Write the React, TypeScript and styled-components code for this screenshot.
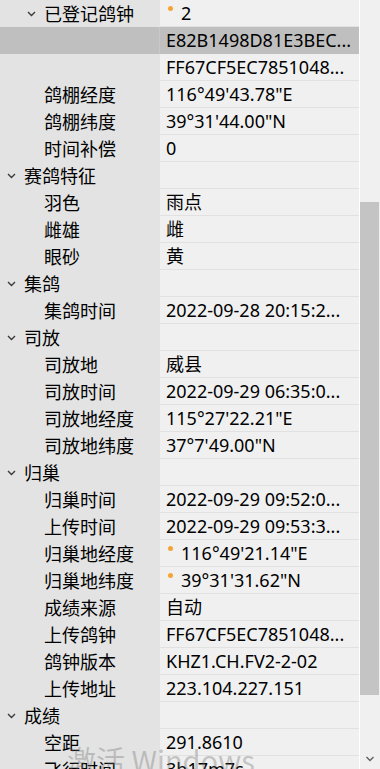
import React from "react";
import styled, { createGlobalStyle } from "styled-components";

const GlobalStyle = createGlobalStyle`
  html, body {
    margin: 0;
    padding: 0;
    height: 769px;
    overflow: hidden;
    background: #f0f0f0;
  }
  body {
    font-family: "Noto Sans", "Noto Sans CJK SC", sans-serif;
    font-size: 18px;
    color: #000;
  }
`;

const Frame = styled.div`
  position: relative;
  display: flex;
  width: 380px;
  height: 769px;
  overflow: hidden;
`;

const Grid = styled.div`
  width: 359px;
  border-right: 1px solid #ffffff;
  display: flex;
  flex-direction: column;
`;

const Row = styled.div<{ $selected?: boolean }>`
  display: grid;
  grid-template-columns: 159px 1px 1fr;
  height: 27px;
  flex-shrink: 0;
  background: ${({ $selected }) => ($selected ? "#bfbfbf" : "transparent")};
`;

const NameCell = styled.div<{ $indent: number; $selected?: boolean }>`
  display: flex;
  align-items: center;
  padding-left: ${({ $indent }) => $indent}px;
  background: ${({ $selected }) => ($selected ? "#bfbfbf" : "#e3e3e3")};
  line-height: 26px;
  white-space: nowrap;
  overflow: hidden;
`;

const Divider = styled.div<{ $selected?: boolean }>`
  background: ${({ $selected }) => ($selected ? "#c9c9c9" : "#e3e3e3")};
`;

const ValueCell = styled.div<{ $selected?: boolean }>`
  display: flex;
  align-items: flex-start;
  height: 26px;
  padding-left: 6px;
  line-height: 26px;
  background: ${({ $selected }) => ($selected ? "#bfbfbf" : "#f0f0f0")};
  border-bottom: 1px solid ${({ $selected }) => ($selected ? "#bfbfbf" : "#e1e1e1")};
  white-space: nowrap;
  overflow: hidden;
`;

const Toggle = styled.span`
  display: inline-flex;
  align-items: center;
  justify-content: flex-start;
  width: 17px;
  height: 26px;
  padding-left: 1px;
  flex-shrink: 0;
`;

const Dot = styled.span`
  width: 5px;
  height: 5px;
  border-radius: 50%;
  background: #f6a433;
  margin: 6px 8px 0 2px;
  flex-shrink: 0;
`;

const ScrollBar = styled.div`
  width: 20px;
  display: flex;
  flex-direction: column;
  background: #f0f0f0;
`;

const TrackTop = styled.div`
  height: 202px;
`;

const Thumb = styled.div`
  height: 493px;
  width: 19px;
  background: #c4c4c4;
`;

const TrackBottom = styled.div`
  flex: 1;
  display: flex;
  align-items: flex-end;
  justify-content: center;
  padding-bottom: 7px;
`;

const Watermark = styled.div`
  position: absolute;
  left: 67px;
  top: 741px;
  font-family: "Noto Sans CJK SC", "Noto Sans", sans-serif;
  font-size: 29px;
  line-height: 36px;
  color: rgba(110, 110, 110, 0.34);
  pointer-events: none;
  white-space: nowrap;
`;

const Chevron = ({ color = "#3a3a3a", w = 9 }: { color?: string; w?: number }) => (
  <svg width={w} height={6} viewBox="0 0 9 6">
    <polyline points="1,1 4.5,4.5 8,1" fill="none" stroke={color} strokeWidth={1.4} />
  </svg>
);

type Item = {
  name: string;
  value?: string;
  level: 0 | 1 | 2;
  expandable?: boolean;
  dot?: boolean;
  selected?: boolean;
};

const items: Item[] = [
  { name: "已登记鸽钟", value: "2", level: 1, expandable: true, dot: true },
  { name: "", value: "E82B1498D81E3BEC...", level: 2, selected: true },
  { name: "", value: "FF67CF5EC7851048...", level: 2 },
  { name: "鸽棚经度", value: "116°49'43.78\"E", level: 1 },
  { name: "鸽棚纬度", value: "39°31'44.00\"N", level: 1 },
  { name: "时间补偿", value: "0", level: 1 },
  { name: "赛鸽特征", level: 0, expandable: true },
  { name: "羽色", value: "雨点", level: 1 },
  { name: "雌雄", value: "雌", level: 1 },
  { name: "眼砂", value: "黄", level: 1 },
  { name: "集鸽", level: 0, expandable: true },
  { name: "集鸽时间", value: "2022-09-28 20:15:2...", level: 1 },
  { name: "司放", level: 0, expandable: true },
  { name: "司放地", value: "威县", level: 1 },
  { name: "司放时间", value: "2022-09-29 06:35:0...", level: 1 },
  { name: "司放地经度", value: "115°27'22.21\"E", level: 1 },
  { name: "司放地纬度", value: "37°7'49.00\"N", level: 1 },
  { name: "归巢", level: 0, expandable: true },
  { name: "归巢时间", value: "2022-09-29 09:52:0...", level: 1 },
  { name: "上传时间", value: "2022-09-29 09:53:3...", level: 1 },
  { name: "归巢地经度", value: "116°49'21.14\"E", level: 1, dot: true },
  { name: "归巢地纬度", value: "39°31'31.62\"N", level: 1, dot: true },
  { name: "成绩来源", value: "自动", level: 1 },
  { name: "上传鸽钟", value: "FF67CF5EC7851048...", level: 1 },
  { name: "鸽钟版本", value: "KHZ1.CH.FV2-2-02", level: 1 },
  { name: "上传地址", value: "223.104.227.151", level: 1 },
  { name: "成绩", level: 0, expandable: true },
  { name: "空距", value: "291.8610", level: 1 },
  { name: "飞行时间", value: "3h17m7s", level: 1 },
];

function indentFor(item: Item) {
  if (item.level === 0) return 6;
  if (item.expandable) return 26;
  return 44;
}

export default function App() {
  return (
    <>
      <GlobalStyle />
      <Frame>
        <Grid>
          {items.map((item, i) => (
            <Row key={i} $selected={item.selected}>
              <NameCell $indent={indentFor(item)} $selected={item.selected}>
                {item.expandable && (
                  <Toggle>
                    <Chevron />
                  </Toggle>
                )}
                {item.name}
              </NameCell>
              <Divider $selected={item.selected} />
              <ValueCell $selected={item.selected}>
                {item.dot && <Dot />}
                {item.value}
              </ValueCell>
            </Row>
          ))}
        </Grid>
        <ScrollBar>
          <TrackTop />
          <Thumb />
          <TrackBottom>
            <Chevron color="#606060" w={10} />
          </TrackBottom>
        </ScrollBar>
        <Watermark>激活 Windows</Watermark>
      </Frame>
    </>
  );
}
